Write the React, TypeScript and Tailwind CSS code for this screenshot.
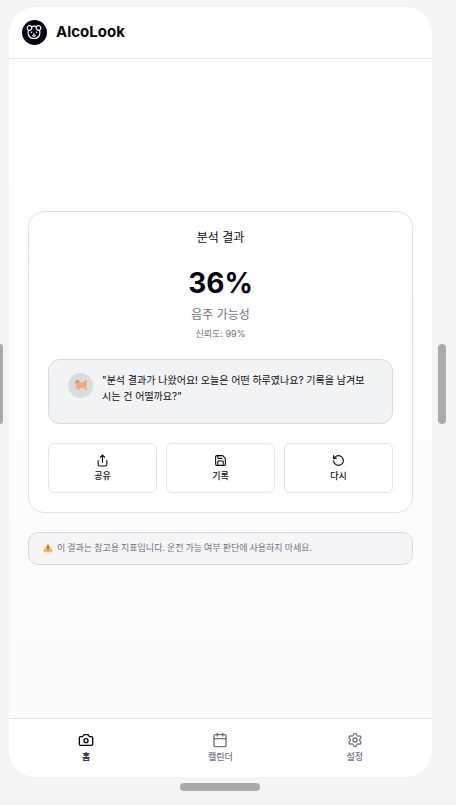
import type { ReactNode } from "react";
import { Calendar, Camera, RotateCcw, Save, Settings, Share } from "lucide-react";

function PuppyLogo() {
  return (
    <svg viewBox="0 0 25 25" className="size-[25px]" aria-hidden="true">
      <circle cx="12.5" cy="12.5" r="12.5" fill="#030213" />
      <g fill="none" stroke="#fff" strokeWidth="1.2" strokeLinecap="round" strokeLinejoin="round">
        <path d="M9.600 6.600C8 4.600 5 5.700 5.200 8.300c.1 1.100.7 1.900 1.600 2.200M14.400 6.600c1.600-2 4.600-.9 4.400 1.700-.1 1.100-.7 1.900-1.600 2.200" />
        <path d="M9.600 6.600c1.600-.5 3.200-.5 4.800 0M6.400 10.900c-.6 1.700-.4 3.500.3 4.700 1 1.800 2.900 2.900 5.300 2.900s4.300-1.100 5.300-2.900c.7-1.200.9-3 .3-4.700" />
        <path d="M9.800 6.900c.4 2.100-.9 3.400-2.900 3.600M14.200 6.900c-.4 2.100.9 3.400 2.900 3.600" />
        <path d="M10.700 15.700c.6.600 2 .6 2.600 0" />
      </g>
      <g fill="#fff">
        <circle cx="9.500" cy="12.200" r=".8" />
        <circle cx="14.500" cy="12.200" r=".8" />
        <ellipse cx="12" cy="14.300" rx="1.100" ry=".7" />
      </g>
    </svg>
  );
}

function DogFigure() {
  return (
    <svg viewBox="0 0 14 12" className="h-3 w-3.5" aria-hidden="true">
      <path
        d="M.6 3.400 1.800 1.400 3.400.8 5.200 1.700l1 1.500 3.800-.2.900-1.200C11.200.6 13 .6 13.200 1.900c.1 1-.4 1.700-.7 2.500v2.500l.7 1.800-.3 2.200h-1.800l-.7-1.600-1.300-.6-2.800.2-.5 1.900H4l-.1-1.700-1.300.6-1.300-.5.8-1.700.4-1.900-1.700-.6z"
        fill="#f4ae77"
      />
      <path d="m3.600.9 1.200.7.600 2.400-1.200-.6z" fill="#d98a68" />
      <path d="M3 5.600 5.400 5.400l.9 1.100 3.500.8-3 1.300-3.500-.5z" fill="#f49a93" />
      <path d="m10 4.200 1.600.3-.2 2.300-1.700-.8z" fill="#ed9a76" />
      <circle cx="2.400" cy="2.600" r=".5" fill="#604a45" />
    </svg>
  );
}

function WarningSign() {
  return (
    <svg viewBox="0 0 10 9" className="h-[9px] w-2.5 shrink-0" aria-hidden="true">
      <path d="M5 .8 9.300 8.300H.7z" fill="#f9b44c" stroke="#f9b44c" strokeLinejoin="round" />
      <path d="M5 2.800v3M5 7v.7" stroke="#594a42" strokeWidth="1.100" />
    </svg>
  );
}

function ActionButton({ icon, label }: { icon: ReactNode; label: string }) {
  return (
    <button
      type="button"
      className="flex flex-col items-center gap-px rounded-md border border-[#e4e4e6] bg-white pt-2.5 pb-2 text-[9px] leading-4 font-medium text-[#0a0a0a]"
    >
      {icon}
      {label}
    </button>
  );
}

function NavButton({ icon, label, active = false }: { icon: ReactNode; label: string; active?: boolean }) {
  return (
    <button
      type="button"
      aria-current={active ? "page" : undefined}
      className={`flex flex-1 flex-col items-center gap-px pt-[13px] pb-3 text-[9px] leading-4 font-medium ${
        active ? "text-[#030213]" : "text-[#717182]"
      }`}
    >
      {icon}
      {label}
    </button>
  );
}

export default function App() {
  return (
    <div className="flex min-h-screen flex-col items-stretch bg-[#f4f4f4] pt-[7px] font-['Inter','Noto_Sans_CJK_KR',sans-serif] text-[#0a0a0a]">
      <div className="flex flex-1 items-stretch">
        <div className="mb-4 h-20 w-[3px] shrink-0 self-center rounded-r bg-[#aaaaaa]" />
        <div className="ml-1.5 flex min-w-0 flex-1 flex-col overflow-hidden rounded-[27px] bg-white">
          <header className="flex h-[52px] items-center gap-[9px] border-b border-[#e4e4e4] px-[13px]">
            <PuppyLogo />
            <h1 className="pb-0.5 text-[15px] leading-6 font-bold">AlcoLook</h1>
          </header>

          <main className="flex flex-1 flex-col justify-center gap-[19px] bg-linear-to-b from-white to-[#fafafa] px-[19px] pb-0.5">
            <section className="rounded-2xl border border-[#e2e2e3] bg-white px-[19px] pt-[17px] pb-[19px]">
              <div className="text-center">
                <h2 className="text-xs leading-[18px]">분석 결과</h2>
                <p className="mt-[18px] text-[28px] leading-9 font-bold text-[#030213]">36%</p>
                <p className="mt-[5px] text-xs leading-[18px] text-[#717182]">음주 가능성</p>
                <p className="mt-0.5 text-[9px] leading-4 text-[#717182]">신뢰도: 99%</p>
              </div>

              <div className="mt-[17px] flex gap-[9px] rounded-xl border border-[#d9dadd] bg-[#f2f3f5] px-[19px] pt-3 pb-[19px]">
                <div className="mt-px flex size-[25px] shrink-0 items-center justify-center rounded-full bg-[#d9dbdf]">
                  <DogFigure />
                </div>
                <p className="text-[10px] leading-4 break-all">
                  "분석 결과가 나왔어요! 오늘은 어떤 하루였나요? 기록을 남겨보시는 건 어떨까요?"
                </p>
              </div>

              <div className="mt-[19px] grid grid-cols-3 gap-[9px]">
                <ActionButton icon={<Share size={13} />} label="공유" />
                <ActionButton icon={<Save size={13} />} label="기록" />
                <ActionButton icon={<RotateCcw size={13} />} label="다시" />
              </div>
            </section>

            <p className="flex items-center gap-1 rounded-[10px] border border-[#d9dadd] bg-[#f5f5f7] px-3.5 pt-1.5 pb-2 font-['Noto_Sans_CJK_KR',sans-serif] text-[9px] leading-[17px] text-[#717182]">
              <WarningSign />
              이 결과는 참고용 지표입니다. 운전 가능 여부 판단에 사용하지 마세요.
            </p>
          </main>

          <nav className="flex border-t border-[#e2e2e3] bg-white px-2.5">
            <NavButton icon={<Camera size={16} />} label="홈" active />
            <NavButton icon={<Calendar size={16} />} label="캘린더" />
            <NavButton icon={<Settings size={16} />} label="설정" />
          </nav>
        </div>
        <div className="mr-2.5 mb-4 ml-1.5 h-20 w-2 shrink-0 self-center rounded bg-[#aaaaaa]" />
      </div>
      <div className="flex h-7 justify-center pt-1.5 pr-4">
        <div className="h-2 w-20 rounded bg-[#aaaaaa]" />
      </div>
    </div>
  );
}
